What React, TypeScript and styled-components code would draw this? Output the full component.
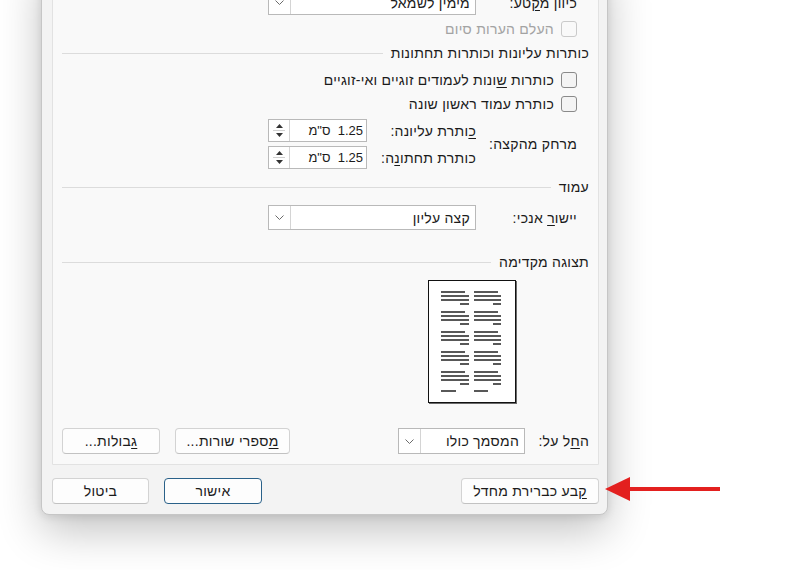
import React from 'react';
import styled, { createGlobalStyle } from 'styled-components';

const GlobalStyle = createGlobalStyle`
  html, body {
    margin: 0;
    padding: 0;
    background: #ffffff;
  }
  body {
    font-family: "Liberation Sans", "DejaVu Sans", sans-serif;
    font-size: 14px;
    letter-spacing: 0.25px;
    color: #1b1b1b;
    overflow: hidden;
  }
`;

const Page = styled.div`
  position: relative;
  width: 802px;
  height: 570px;
  overflow: hidden;
`;

const Dialog = styled.div`
  box-sizing: border-box;
  width: 567px;
  margin: -40px 0 0 41px;
  padding: 10px 8px 10px 10px;
  background: #f3f3f3;
  border: 1px solid #c6c6c6;
  border-radius: 8px;
  box-shadow: 0 16px 44px rgba(0, 0, 0, 0.24), 0 2px 8px rgba(0, 0, 0, 0.1);
  direction: rtl;
`;

const Panel = styled.div`
  display: flex;
  flex-direction: column;
  padding: 18px 9px 10px 9px;
  background: #f9f9f9;
  border: 1px solid #e2e2e2;
  border-radius: 4px 4px 0 0;
`;

const U = styled.u`
  text-decoration: underline;
  text-underline-offset: 2px;
`;

const FieldRow = styled.div<{ $top?: number; $height?: number }>`
  display: flex;
  align-items: center;
  margin-top: ${p => p.$top ?? 0}px;
  height: ${p => p.$height ?? 25}px;
  padding-right: 12px;
`;

const Label = styled.div<{ $width?: number }>`
  width: ${p => p.$width ?? 101}px;
  flex-shrink: 0;
  white-space: nowrap;
`;

const Select = styled.div<{ $width: number }>`
  box-sizing: border-box;
  display: flex;
  align-items: center;
  width: ${p => p.$width}px;
  height: 100%;
  background: #ffffff;
  border: 1px solid #b9b9b9;
`;

const SelectValue = styled.div`
  flex: 1;
  padding-right: 5px;
  white-space: nowrap;
`;

const DropButton = styled.div`
  display: flex;
  align-items: center;
  justify-content: center;
  width: 21px;
  height: 100%;
  border-right: 1px solid #d4d4d4;
  color: #6b6b6b;
`;

const Chevron = () => (
  <svg width="9" height="5" viewBox="0 0 9 5">
    <path d="M0.5 0.5 L4.5 4.5 L8.5 0.5" fill="none" stroke="currentColor" strokeWidth="1" />
  </svg>
);

const CheckRow = styled.label<{ $top: number; $disabled?: boolean }>`
  display: flex;
  align-items: center;
  gap: 7px;
  height: 22px;
  margin-top: ${p => p.$top}px;
  padding-right: 12px;
  color: ${p => (p.$disabled ? '#a3a3a3' : '#1b1b1b')};
  white-space: nowrap;
`;

const Box = styled.span<{ $disabled?: boolean }>`
  box-sizing: border-box;
  width: 16px;
  height: 16px;
  border-radius: 3px;
  border: 1px solid ${p => (p.$disabled ? '#cacaca' : '#8a8a8a')};
  background: ${p => (p.$disabled ? '#f9f9f9' : '#f4f4f4')};
`;

const Section = styled.div<{ $top: number }>`
  display: flex;
  align-items: center;
  gap: 8px;
  height: 16px;
  margin-top: ${p => p.$top}px;
  white-space: nowrap;
`;

const Rule = styled.div`
  flex: 1;
  height: 1px;
  background: #dcdcdc;
`;

const DistanceGroup = styled.div`
  display: flex;
  align-items: center;
  margin-top: 4px;
  padding-right: 12px;
`;

const SpinList = styled.div`
  display: flex;
  flex-direction: column;
  gap: 4px;
`;

const SpinRow = styled.div`
  display: flex;
  align-items: center;
  height: 23px;
`;

const SpinBox = styled.div`
  box-sizing: border-box;
  display: flex;
  align-items: center;
  width: 99px;
  height: 100%;
  background: #ffffff;
  border: 1px solid #b9b9b9;
`;

const SpinValue = styled.div`
  flex: 1;
  padding-right: 3px;
  font-size: 13px;
  letter-spacing: 0;
  white-space: pre;
`;

const SpinArrows = styled.div`
  display: flex;
  flex-direction: column;
  align-items: center;
  justify-content: center;
  gap: 2px;
  width: 20px;
  height: 100%;
  border-right: 1px solid #d4d4d4;
  color: #333333;
`;

const SpinDivider = styled.div`
  width: 12px;
  height: 1px;
  background: #d0d0d0;
`;

const Triangle = ({ up }: { up?: boolean }) => (
  <svg width="7" height="4" viewBox="0 0 7 4">
    <path d={up ? 'M0 4 L3.5 0 L7 4 Z' : 'M0 0 L3.5 4 L7 0 Z'} fill="currentColor" />
  </svg>
);

const PreviewArea = styled.div`
  display: flex;
  margin-top: 10px;
  padding-right: 73px;
`;

const Sheet = styled.div`
  width: 86px;
  height: 121px;
  background: #ffffff;
  border: 1px solid #111111;
  box-shadow: 1px 1px 0 #6a6a6a;
  direction: ltr;
`;

const BottomRow = styled.div`
  display: flex;
  align-items: center;
  justify-content: space-between;
  height: 26px;
  margin-top: 25px;
`;

const Group = styled.div`
  display: flex;
  align-items: center;
  height: 100%;
  gap: 15px;
`;

const Button = styled.button<{ $width: number; $primary?: boolean }>`
  box-sizing: border-box;
  width: ${p => p.$width}px;
  height: 26px;
  padding: 0;
  font: inherit;
  letter-spacing: inherit;
  color: #1b1b1b;
  background: #fdfdfd;
  border: 1px solid ${p => (p.$primary ? '#2a6189' : '#d3d3d3')};
  border-bottom-color: ${p => (p.$primary ? '#2a6189' : '#c2c2c2')};
  border-radius: 4px;
  direction: rtl;
`;

const Footer = styled.div`
  display: flex;
  justify-content: space-between;
  margin-top: 13px;
`;

const ArrowMark = styled.svg`
  position: absolute;
  left: 600px;
  top: 474px;
`;

const paragraphs = [11, 31, 51, 71, 91];

const PreviewLines = () => (
  <svg width="86" height="121" viewBox="0 0 86 121">
    <g stroke="#111" strokeWidth="1.4">
      {paragraphs.map(y => (
        <g key={y}>
          <line x1="12" y1={y} x2="36" y2={y} />
          <line x1="12" y1={y + 4} x2="40" y2={y + 4} />
          <line x1="12" y1={y + 8} x2="40" y2={y + 8} />
          <line x1="31" y1={y + 12} x2="40" y2={y + 12} />
          <line x1="45" y1={y} x2="69" y2={y} />
          <line x1="45" y1={y + 4} x2="72" y2={y + 4} />
          <line x1="45" y1={y + 8} x2="72" y2={y + 8} />
          <line x1="64" y1={y + 12} x2="72" y2={y + 12} />
        </g>
      ))}
      <line x1="12" y1="110" x2="27" y2="110" />
      <line x1="45" y1="110" x2="59" y2="110" />
    </g>
  </svg>
);

const App = () => {
  return (
    <Page>
      <GlobalStyle />
      <Dialog>
        <Panel>
          <FieldRow>
            <Label>
              כיוון מ<U>ק</U>טע:
            </Label>
            <Select $width={208}>
              <SelectValue>מימין לשמאל</SelectValue>
              <DropButton>
                <Chevron />
              </DropButton>
            </Select>
          </FieldRow>
          <CheckRow $top={3} $disabled>
            <Box $disabled />
            העלם הערות סיום
          </CheckRow>

          <Section $top={5}>
            כותרות עליונות וכותרות תחתונות
            <Rule />
          </Section>
          <CheckRow $top={8}>
            <Box />
            <span>
              כותרות <U>ש</U>ונות לעמודים זוגיים ואי-זוגיים
            </span>
          </CheckRow>
          <CheckRow $top={2}>
            <Box />
            <span>
              כותרת עמוד ראשו<U>ן</U> שונה
            </span>
          </CheckRow>
          <DistanceGroup>
            <Label>מרחק מהקצה:</Label>
            <SpinList>
              {[
                { key: 'top', label: <><U>כ</U>ותרת עליונה:</> },
                { key: 'bottom', label: <>כותרת תחתו<U>נ</U>ה:</> }
              ].map(item => (
                <SpinRow key={item.key}>
                  <Label $width={109}>{item.label}</Label>
                  <SpinBox>
                    <SpinValue>{'1.25  ס"מ'}</SpinValue>
                    <SpinArrows>
                      <Triangle up />
                      <SpinDivider />
                      <Triangle />
                    </SpinArrows>
                  </SpinBox>
                </SpinRow>
              ))}
            </SpinList>
          </DistanceGroup>

          <Section $top={10}>
            עמוד
            <Rule />
          </Section>
          <FieldRow $top={10}>
            <Label>
              יישו<U>ר</U> אנכי:
            </Label>
            <Select $width={208}>
              <SelectValue>קצה עליון</SelectValue>
              <DropButton>
                <Chevron />
              </DropButton>
            </Select>
          </FieldRow>

          <Section $top={24}>
            תצוגה מקדימה
            <Rule />
          </Section>
          <PreviewArea>
            <Sheet>
              <PreviewLines />
            </Sheet>
          </PreviewArea>

          <BottomRow>
            <Group>
              <Label $width={49}>
                ה<U>ח</U>ל על:
              </Label>
              <Select $width={127}>
                <SelectValue>המסמך כולו</SelectValue>
                <DropButton>
                  <Chevron />
                </DropButton>
              </Select>
            </Group>
            <Group>
              <Button $width={115}>
                <U>מ</U>ספרי שורות...
              </Button>
              <Button $width={98}>
                <U>ג</U>בולות...
              </Button>
            </Group>
          </BottomRow>
        </Panel>
        <Footer>
          <Button $width={138}>
            <U>ק</U>בע כברירת מחדל
          </Button>
          <Group>
            <Button $width={98} $primary>
              אישור
            </Button>
            <Button $width={97}>ביטול</Button>
          </Group>
        </Footer>
      </Dialog>
      <ArrowMark width="125" height="30" viewBox="0 0 125 30">
        <path d="M5 15 L30 3 L30 27 Z" fill="#e3201f" />
        <rect x="29" y="13" width="91" height="4" fill="#e3201f" />
      </ArrowMark>
    </Page>
  );
};

export default App;
